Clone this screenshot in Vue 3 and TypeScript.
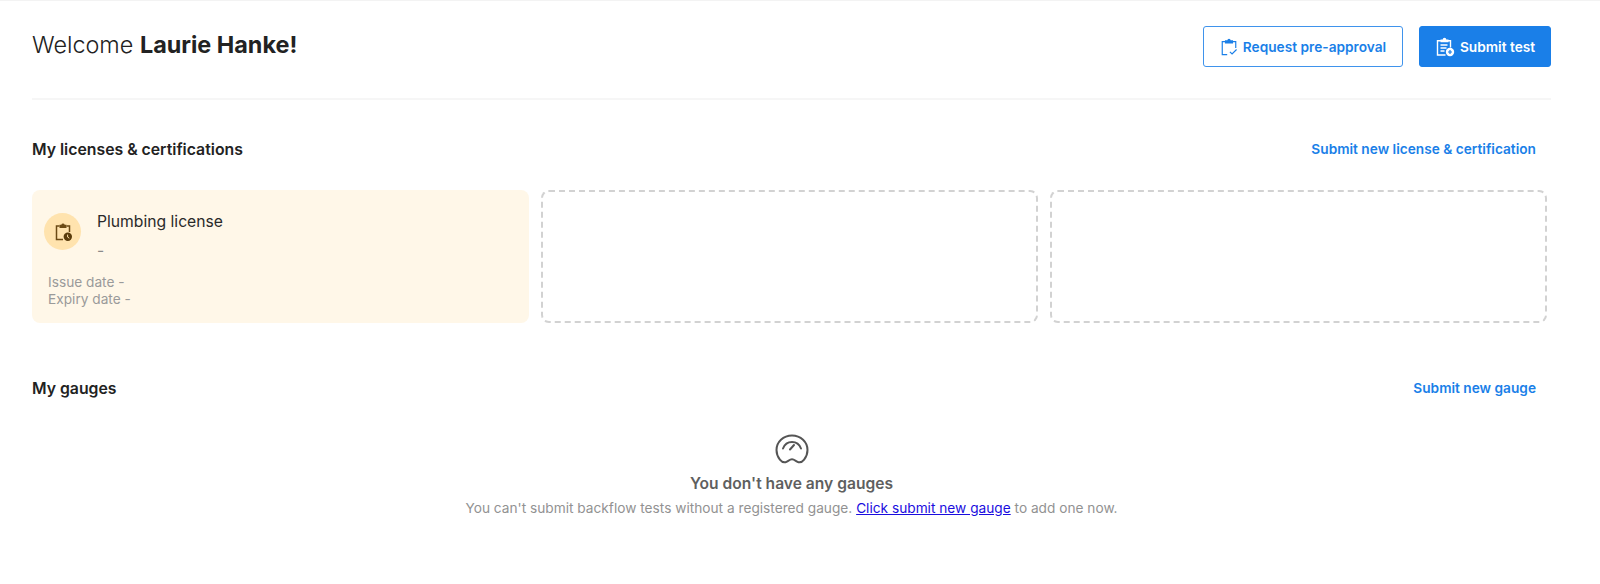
<template>
  <div class="page">
    <header class="top">
      <h1 class="welcome">Welcome <strong>{{ userName }}!</strong></h1>
      <div class="actions">
        <button class="btn btn-outline">
          <svg class="btn-icon" width="18" height="18" viewBox="0 0 20 20" fill="none" stroke="currentColor" stroke-width="1.3">
            <path d="M6 4H2.500v14.500H8" />
            <path d="M14 4h3.500v7" />
            <path d="M5.500 2.500h2.700a1.800 1.800 0 0 1 3.600 0h2.700v3.700h-9z" fill="currentColor" stroke="none" />
            <path d="M11 15.500l2.400 2.300 5-5" />
          </svg>
          Request pre-approval
        </button>
        <button class="btn btn-solid">
          <svg class="btn-icon" width="20" height="20" viewBox="0 0 20 20" fill="none" stroke="currentColor" stroke-width="1.4">
            <path d="M10.500 18H2.500V3.800H15.500V10.500" />
            <path d="M5.500 2.500h2.200a1.800 1.800 0 0 1 3.600 0h2.200v2.800h-8z" fill="currentColor" stroke="none" />
            <path d="M5.500 8h7M5.500 11h6M5.500 14h4" />
            <circle cx="15" cy="15" r="4.200" fill="currentColor" stroke="none" />
            <path d="M15 13v4M13 15h4" stroke="#1a7fe8" stroke-width="1.200" />
          </svg>
          Submit test
        </button>
      </div>
    </header>

    <section class="licenses">
      <div class="section-head">
        <h2>My licenses &amp; certifications</h2>
        <a class="section-link">Submit new license &amp; certification</a>
      </div>
      <div class="cards">
        <div class="card">
          <div class="card-main">
            <span class="card-badge">
              <svg width="20" height="20" viewBox="0 0 20 20" fill="none" stroke="#6b4a14" stroke-width="1.500">
                <path d="M6.500 4H3.500v13.500H10" />
                <path d="M13.500 4h3v6" />
                <path d="M6.500 2.800h1.800a1.800 1.800 0 0 1 3.400 0h1.800v3.200h-7z" fill="#6b4a14" stroke="none" />
                <circle cx="14.800" cy="14.800" r="4.200" fill="#5a3c0c" stroke="none" />
                <path d="M14.600 12.600v2.400l1.700 1.200" stroke="#ffe3ae" stroke-width="1" />
              </svg>
            </span>
            <div class="card-text">
              <div class="card-title">Plumbing license</div>
              <div class="card-sub">-</div>
            </div>
          </div>
          <div class="card-dates">
            <div>Issue date -</div>
            <div>Expiry date -</div>
          </div>
        </div>
        <div class="slot"></div>
        <div class="slot"></div>
      </div>
    </section>

    <section class="gauges">
      <div class="section-head">
        <h2>My gauges</h2>
        <a class="section-link">Submit new gauge</a>
      </div>
      <div class="empty">
        <svg class="empty-icon" width="34" height="30" viewBox="0 0 34 30" fill="none" stroke="#555" stroke-width="2" stroke-linecap="round">
          <path d="M17 1.500C8.200 1.500 1.500 8.200 1.500 16c0 3.800 1.300 7 3.400 9.600 1.800 2.300 4.600 3.300 7 2 1.800-1 3.200-2.300 5.100-2.300s3.300 1.300 5.100 2.300c2.400 1.300 5.200.3 7-2 2.100-2.600 3.400-5.800 3.400-9.600C32.500 8.200 25.800 1.500 17 1.500z" />
          <path d="M8 14.500C9.500 10.500 13 8 17 8s7.500 2.500 9 6.500" />
          <path d="M15 15.500l4-4.500" />
        </svg>
        <div class="empty-title">You don't have any gauges</div>
        <p class="empty-text">
          You can't submit backflow tests without a registered gauge.
          <a href="#">Click submit new gauge</a> to add one now.
        </p>
      </div>
    </section>
  </div>
</template>

<script setup lang="ts">
const userName = "Laurie Hanke";
</script>

<style>
html,
body {
  background: #fff;
}
</style>

<style scoped>
.page {
  height: 584px;
  box-sizing: border-box;
  border-top: 1px solid #f3f3f3;
  padding: 0 49px 0 32px;
  font-family: Inter, "Liberation Sans", sans-serif;
  color: #1c1c1c;
  overflow: hidden;
}

.top {
  display: flex;
  justify-content: space-between;
  align-items: flex-start;
  height: 72px;
  border-bottom: 2px solid #f6f6f6;
  padding-top: 25px;
}

.welcome {
  margin: 1px 0 0;
  font-size: 23.4px;
  line-height: 36px;
  font-weight: 300;
  color: #222;
}

.welcome strong {
  font-weight: 700;
}

.actions {
  display: flex;
  gap: 16px;
}

.btn {
  display: flex;
  align-items: center;
  justify-content: center;
  gap: 5px;
  height: 41px;
  box-sizing: border-box;
  border-radius: 3px;
  font-family: inherit;
  font-size: 13.7px;
  font-weight: 600;
  padding: 0;
}

.btn-outline {
  width: 200px;
  background: #fff;
  border: 1px solid #3f93ec;
  color: #1a7fe8;
}

.btn-solid {
  width: 132px;
  background: #1a7fe8;
  border: 1px solid #1a7fe8;
  color: #fff;
}

.btn-icon {
  flex-shrink: 0;
}

.licenses {
  padding-top: 37px;
}

.section-head {
  display: flex;
  justify-content: space-between;
  align-items: center;
  height: 24px;
  padding-right: 15px;
}

.section-head h2 {
  margin: 0;
  font-size: 15.8px;
  font-weight: 600;
  color: #222;
}

.section-link {
  font-size: 13.7px;
  font-weight: 600;
  color: #1a7fe8;
}

.cards {
  display: grid;
  grid-template-columns: repeat(3, 497px);
  gap: 12px;
  margin-top: 29px;
}

.card {
  height: 133px;
  box-sizing: border-box;
  background: #fff7e8;
  border-radius: 8px;
  padding: 23px 12px 0;
}

.card-main {
  display: flex;
  gap: 16px;
}

.card-badge {
  display: flex;
  align-items: center;
  justify-content: center;
  width: 37px;
  height: 37px;
  border-radius: 50%;
  background: #ffe3ae;
  flex-shrink: 0;
}

.card-title {
  font-size: 15.7px;
  line-height: 18px;
  color: #2a2a2a;
}

.card-sub {
  font-size: 15.6px;
  line-height: 18px;
  margin-top: 11px;
  color: #8a8a8a;
}

.card-dates {
  margin: 14px 0 0 4px;
  font-size: 13.7px;
  line-height: 16.5px;
  color: #9a9a9a;
}

.slot {
  height: 133px;
  box-sizing: border-box;
  border: 2px dashed #d2d2d2;
  border-radius: 8px;
}

.gauges {
  padding-top: 53px;
}

.empty {
  display: flex;
  flex-direction: column;
  align-items: center;
  margin-top: 34px;
}

.empty-title {
  font-size: 15.6px;
  line-height: 18px;
  font-weight: 600;
  color: #5f5f5f;
  margin-top: 11px;
}

.empty-text {
  margin: 6px 0 0;
  font-size: 13.7px;
  line-height: 18px;
  color: #929292;
}

.empty-text a {
  color: #1a0dde;
  text-decoration: underline;
}
</style>
